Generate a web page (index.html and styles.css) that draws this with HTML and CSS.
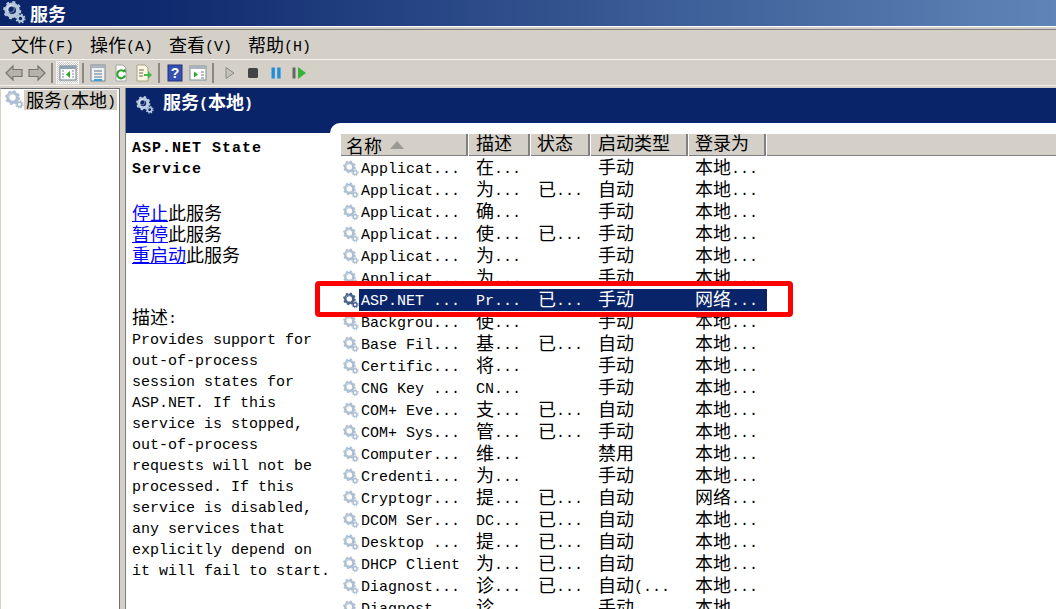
FILE: index.html
```html
<!DOCTYPE html>
<html lang="zh-CN">
<head>
<meta charset="utf-8">
<title>服务</title>
<link rel="stylesheet" href="styles.css">
</head>
<body>
<svg class="sprite" xmlns="http://www.w3.org/2000/svg">
  <symbol id="gear" viewBox="0 0 20 20">
    <circle cx="8" cy="8" r="5" fill="none" stroke="currentColor" stroke-width="3.4"/>
    <circle cx="8" cy="8" r="6.9" fill="none" stroke="currentColor" stroke-width="2" stroke-dasharray="2.6 2.8"/>
    <circle cx="15.2" cy="15.2" r="2.4" fill="none" stroke="currentColor" stroke-width="1.8"/>
    <circle cx="15.2" cy="15.2" r="3.8" fill="none" stroke="currentColor" stroke-width="1.2" stroke-dasharray="1.5 1.5"/>
    <circle cx="6.8" cy="6.8" r="3" fill="none" stroke="#fff" stroke-opacity=".45" stroke-width="1"/>
  </symbol>
</svg>
<div class="window">
  <header class="titlebar">
    <svg class="title-gear"><use href="#gear"/></svg>
    <span class="c title-text">服务</span>
  </header>
  <nav class="menubar">
    <span class="menu"><span class="c">文件</span>(F)</span>
    <span class="menu"><span class="c">操作</span>(A)</span>
    <span class="menu"><span class="c">查看</span>(V)</span>
    <span class="menu"><span class="c">帮助</span>(H)</span>
  </nav>
  <div class="toolbar">
    <span class="tool"><svg viewBox="0 0 18 18"><path d="M1 9 8 2v3.500h9v7H8V16z" fill="#b5b2ab" stroke="#77756f" stroke-width="1.2"/></svg></span>
    <span class="tool"><svg viewBox="0 0 18 18"><path d="M17 9 10 2v3.500H1v7h9V16z" fill="#b5b2ab" stroke="#77756f" stroke-width="1.2"/></svg></span>
    <span class="sep"></span>
    <span class="tool active"><svg viewBox="0 0 18 18"><rect x="1" y="2" width="16" height="14" fill="#fff" stroke="#6f7f8c"/><rect x="1" y="2" width="16" height="3" fill="#8fa3b3"/><path d="M11 7v7L7 10.500z" fill="#2fa52f"/><path d="M3 7h2M3 10h2M3 13h2M13 7h2M13 10h2M13 13h2" stroke="#7a8794"/></svg></span>
    <span class="sep narrow"></span>
    <span class="tool"><svg viewBox="0 0 18 18"><rect x="2" y="1" width="14" height="16" fill="#eef1f2" stroke="#7c8288"/><rect x="2" y="1" width="14" height="3" fill="#a9b4bd"/><path d="M5 7h8M5 10h8M5 13h8" stroke="#5e7487"/><path d="M5 16h8" stroke="#3aa0e0" stroke-width="2"/></svg></span>
    <span class="tool"><svg viewBox="0 0 18 18"><path d="M4 1h7l3 3v13H4z" fill="#fff" stroke="#a0a4a8"/><path d="M12.500 8A4 4 0 1 0 13 11.500" fill="none" stroke="#2fa52f" stroke-width="2.200"/><path d="m10.500 7 3.500 1.500-.5-4z" fill="#2fa52f"/></svg></span>
    <span class="tool"><svg viewBox="0 0 18 18"><path d="M2 1h8l3 3v13H2z" fill="#fbf6df" stroke="#a7a08a"/><path d="M4 6h5M4 9h4M4 12h4" stroke="#6a675c"/><path d="M9 10h4V7l4 4-4 4v-3H9z" fill="#48b848"/></svg></span>
    <span class="sep"></span>
    <span class="tool"><svg viewBox="0 0 18 18"><rect x="2" y="1" width="14" height="16" fill="#3451b2" stroke="#222f7a"/><text x="9" y="14" class="help-mark">?</text></svg></span>
    <span class="tool"><svg viewBox="0 0 18 18"><rect x="1" y="2" width="16" height="14" fill="#fff" stroke="#7f8c96"/><rect x="1" y="2" width="16" height="3" fill="#a8b3bc"/><path d="M5 7.500v6L9 10.500z" fill="#2fa52f"/><path d="M12 8h3M12 11h3M12 14h3" stroke="#6a7a88"/></svg></span>
    <span class="sep"></span>
    <span class="tool media"><svg viewBox="0 0 18 18"><path d="M5 3.500v11l8-5.500z" fill="#c4c2bc" stroke="#8b8a85"/></svg></span>
    <span class="tool media"><svg viewBox="0 0 18 18"><rect x="4" y="4" width="10" height="10" rx="1.500" fill="#444"/></svg></span>
    <span class="tool media"><svg viewBox="0 0 18 18"><rect x="4.500" y="3.500" width="3.400" height="11" fill="#1f8edc"/><rect x="10.200" y="3.500" width="3.400" height="11" fill="#1f8edc"/></svg></span>
    <span class="tool media"><svg viewBox="0 0 18 18"><rect x="2.500" y="3.500" width="3" height="11" fill="#666"/><path d="M8 3v12l8-6z" fill="#35b335"/></svg></span>
  </div>
  <main class="panes">
    <aside class="tree">
      <svg class="tree-gear"><use href="#gear"/></svg>
      <span class="tree-label"><span class="c">服务</span>(<span class="c">本地</span>)</span>
    </aside>
    <div class="splitter"></div>
    <section class="content">
      <div class="content-head">
        <svg class="head-gear"><use href="#gear"/></svg>
        <span class="head-label"><span class="c">服务</span>(<span class="c">本地</span>)</span>
      </div>
      <div class="content-body">
        <div class="detail">
          <div class="detail-name">ASP.NET State<br>Service</div>
          <div class="detail-actions">
            <div><a class="c" href="#">停止</a><span class="c">此服务</span></div>
            <div><a class="c" href="#">暂停</a><span class="c">此服务</span></div>
            <div><a class="c" href="#">重启动</a><span class="c">此服务</span></div>
          </div>
          <div class="detail-desc">
            <span class="c">描述</span>:<br>
            Provides support for<br>
            out-of-process<br>
            session states for<br>
            ASP.NET. If this<br>
            service is stopped,<br>
            out-of-process<br>
            requests will not be<br>
            processed. If this<br>
            service is disabled,<br>
            any services that<br>
            explicitly depend on<br>
            it will fail to start.
          </div>
        </div>
        <div class="list-wrap">
          <div class="list">
            <div class="list-head">
              <div class="th th-name"><span class="c">名称</span><i class="sort"></i></div>
              <div class="th th-desc"><span class="c">描述</span></div>
              <div class="th th-status"><span class="c">状态</span></div>
              <div class="th th-start"><span class="c">启动类型</span></div>
              <div class="th th-logon"><span class="c">登录为</span></div>
              <div class="th th-rest"></div>
            </div>
            <div class="row"><svg class="row-gear"><use href="#gear"/></svg><div class="cells"><span>Applicat...</span><span><span class="c">在</span>...</span><span></span><span><span class="c">手动</span></span><span><span class="c">本地</span>...</span></div></div>
            <div class="row"><svg class="row-gear"><use href="#gear"/></svg><div class="cells"><span>Applicat...</span><span><span class="c">为</span>...</span><span><span class="c">已</span>...</span><span><span class="c">自动</span></span><span><span class="c">本地</span>...</span></div></div>
            <div class="row"><svg class="row-gear"><use href="#gear"/></svg><div class="cells"><span>Applicat...</span><span><span class="c">确</span>...</span><span></span><span><span class="c">手动</span></span><span><span class="c">本地</span>...</span></div></div>
            <div class="row"><svg class="row-gear"><use href="#gear"/></svg><div class="cells"><span>Applicat...</span><span><span class="c">使</span>...</span><span><span class="c">已</span>...</span><span><span class="c">手动</span></span><span><span class="c">本地</span>...</span></div></div>
            <div class="row"><svg class="row-gear"><use href="#gear"/></svg><div class="cells"><span>Applicat...</span><span><span class="c">为</span>...</span><span></span><span><span class="c">手动</span></span><span><span class="c">本地</span>...</span></div></div>
            <div class="row"><svg class="row-gear"><use href="#gear"/></svg><div class="cells"><span>Applicat...</span><span><span class="c">为</span>...</span><span></span><span><span class="c">手动</span></span><span><span class="c">本地</span>...</span></div></div>
            <div class="row selected"><svg class="row-gear"><use href="#gear"/></svg><div class="cells"><span>ASP.NET ...</span><span>Pr...</span><span><span class="c">已</span>...</span><span><span class="c">手动</span></span><span><span class="c">网络</span>...</span></div></div>
            <div class="row"><svg class="row-gear"><use href="#gear"/></svg><div class="cells"><span>Backgrou...</span><span><span class="c">使</span>...</span><span></span><span><span class="c">手动</span></span><span><span class="c">本地</span>...</span></div></div>
            <div class="row"><svg class="row-gear"><use href="#gear"/></svg><div class="cells"><span>Base Fil...</span><span><span class="c">基</span>...</span><span><span class="c">已</span>...</span><span><span class="c">自动</span></span><span><span class="c">本地</span>...</span></div></div>
            <div class="row"><svg class="row-gear"><use href="#gear"/></svg><div class="cells"><span>Certific...</span><span><span class="c">将</span>...</span><span></span><span><span class="c">手动</span></span><span><span class="c">本地</span>...</span></div></div>
            <div class="row"><svg class="row-gear"><use href="#gear"/></svg><div class="cells"><span>CNG Key ...</span><span>CN...</span><span></span><span><span class="c">手动</span></span><span><span class="c">本地</span>...</span></div></div>
            <div class="row"><svg class="row-gear"><use href="#gear"/></svg><div class="cells"><span>COM+ Eve...</span><span><span class="c">支</span>...</span><span><span class="c">已</span>...</span><span><span class="c">自动</span></span><span><span class="c">本地</span>...</span></div></div>
            <div class="row"><svg class="row-gear"><use href="#gear"/></svg><div class="cells"><span>COM+ Sys...</span><span><span class="c">管</span>...</span><span><span class="c">已</span>...</span><span><span class="c">手动</span></span><span><span class="c">本地</span>...</span></div></div>
            <div class="row"><svg class="row-gear"><use href="#gear"/></svg><div class="cells"><span>Computer...</span><span><span class="c">维</span>...</span><span></span><span><span class="c">禁用</span></span><span><span class="c">本地</span>...</span></div></div>
            <div class="row"><svg class="row-gear"><use href="#gear"/></svg><div class="cells"><span>Credenti...</span><span><span class="c">为</span>...</span><span></span><span><span class="c">手动</span></span><span><span class="c">本地</span>...</span></div></div>
            <div class="row"><svg class="row-gear"><use href="#gear"/></svg><div class="cells"><span>Cryptogr...</span><span><span class="c">提</span>...</span><span><span class="c">已</span>...</span><span><span class="c">自动</span></span><span><span class="c">网络</span>...</span></div></div>
            <div class="row"><svg class="row-gear"><use href="#gear"/></svg><div class="cells"><span>DCOM Ser...</span><span>DC...</span><span><span class="c">已</span>...</span><span><span class="c">自动</span></span><span><span class="c">本地</span>...</span></div></div>
            <div class="row"><svg class="row-gear"><use href="#gear"/></svg><div class="cells"><span>Desktop ...</span><span><span class="c">提</span>...</span><span><span class="c">已</span>...</span><span><span class="c">自动</span></span><span><span class="c">本地</span>...</span></div></div>
            <div class="row"><svg class="row-gear"><use href="#gear"/></svg><div class="cells"><span>DHCP Client</span><span><span class="c">为</span>...</span><span><span class="c">已</span>...</span><span><span class="c">自动</span></span><span><span class="c">本地</span>...</span></div></div>
            <div class="row"><svg class="row-gear"><use href="#gear"/></svg><div class="cells"><span>Diagnost...</span><span><span class="c">诊</span>...</span><span><span class="c">已</span>...</span><span><span class="c">自动</span>(...</span><span><span class="c">本地</span>...</span></div></div>
            <div class="row"><svg class="row-gear"><use href="#gear"/></svg><div class="cells"><span>Diagnost...</span><span><span class="c">诊</span>...</span><span></span><span><span class="c">手动</span></span><span><span class="c">本地</span>...</span></div></div>
          </div>
        </div>
      </div>
    </section>
  </main>
  <div class="callout"></div>
</div>
</body>
</html>
```

FILE: styles.css
```css
html, body {
  margin: 0;
  height: 609px;
  overflow: hidden;
}
body {
  background: #d4d0c8;
  color: #000;
  font: 15px/21px "Liberation Mono", monospace;
}
.sprite { display: none; }
.c {
  font-family: "Noto Sans CJK SC", sans-serif;
  font-size: 18px;
  line-height: 0;
  vertical-align: -1px;
}
.window {
  position: relative;
  height: 609px;
  overflow: hidden;
}

/* title bar */
.titlebar {
  height: 25px;
  padding: 0 0 1px 3px;
  display: flex;
  align-items: center;
  background: linear-gradient(90deg, #0a246a 0%, #0f2a6e 15%, #5f85b7 100%);
  border-bottom: 1px solid #fff;
  color: #fff;
}
.title-gear {
  width: 23px;
  height: 23px;
  color: #b4c6da;
}
.title-text {
  margin-left: 4px;
  font-weight: 700;
}

/* menu */
.menubar {
  height: 23px;
  padding: 6px 0 0 11px;
  margin-top: 2px;
  display: flex;
  align-items: center;
  gap: 16px;
  border-top: 1px solid #808080;
  border-bottom: 1px solid #f4f2ee;
}

/* toolbar */
.toolbar {
  height: 25px;
  display: flex;
  align-items: center;
  padding-left: 2px;
  border-bottom: 1px solid #f4f2ee;
}
.tool {
  width: 23px;
  height: 23px;
  flex: none;
  display: flex;
  align-items: center;
  justify-content: center;
}
.tool svg {
  width: 18px;
  height: 18px;
}
.tool.active {
  box-sizing: border-box;
  background: repeating-conic-gradient(#fff 0 25%, #c8c5be 0 50%) 0 0 / 2px 2px;
  border: 1px solid #f4f2ee;
}
.sep {
  flex: none;
  width: 8px;
  height: 20px;
  background: linear-gradient(#8a8880, #8a8880) center / 2px 100% no-repeat;
}
.sep.narrow { width: 7px; }
.sep + .tool.media { margin-left: 1px; }
.help-mark {
  font: 700 14px "Liberation Sans", sans-serif;
  text-anchor: middle;
  fill: #fff;
}

/* panes */
.panes {
  display: flex;
  height: 521px;
  margin-top: 2px;
}
.tree {
  width: 120px;
  flex: none;
  box-sizing: border-box;
  display: flex;
  align-items: flex-start;
  padding: 1px 2px 0 4px;
  background: #fff;
  border-top: 1px solid #707070;
  border-left: 1px solid #d4d0c8;
  border-right: 1px solid #707070;
}
.tree-gear {
  width: 19px;
  height: 19px;
  flex: none;
  color: #aebfd4;
}
.tree-label {
  height: 17px;
  line-height: 20px;
  padding: 3px 1px 0 2px;
  background: #d4d0c8;
  white-space: nowrap;
}
.splitter {
  width: 6px;
  flex: none;
  box-sizing: border-box;
  border-right: 1px solid #808080;
}
.content {
  flex: 1;
  min-width: 0;
}
.content-head {
  height: 33px;
  padding: 0 0 2px 10px;
  display: flex;
  align-items: center;
  background: #0a246a;
  color: #fff;
}
.head-gear {
  width: 18px;
  height: 18px;
  color: #b9cbe0;
}
.head-label {
  margin-left: 9px;
  font-weight: 700;
}
.content-body {
  display: flex;
  background: #fff;
}
.detail {
  width: 204px;
  flex: none;
  box-sizing: border-box;
  padding: 5px 0 0 6px;
  border-top: 10px solid #0a246a;
  white-space: nowrap;
}
.detail-name {
  font-weight: 700;
  font-size: 15px;
  letter-spacing: 1px;
}
.detail-actions {
  margin-top: 25px;
}
.detail-actions a {
  color: #0000ff;
  text-decoration: underline;
}
.detail-desc {
  margin-top: 41px;
}

/* list */
.list-wrap {
  flex: 1;
  min-width: 0;
  background: #0a246a;
}
.list {
  background: #fff;
  border-top-left-radius: 10px;
  padding: 11px 0 0 10px;
}
.list-head {
  display: flex;
  height: 22px;
  margin-bottom: 1px;
  background: #d4d0c8;
  box-shadow: inset 0 -1px 0 #808080;
}
.th {
  flex: none;
  box-sizing: border-box;
  height: 22px;
  padding-top: 2px;
  line-height: 20px;
  border-left: 1px solid #fff;
  border-right: 2px solid #808080;
  white-space: nowrap;
}
.th-name { width: 128px; padding: 0 0 0 5px; display: flex; align-items: center; }
.th-desc { width: 62px; padding-left: 7px; }
.th-status { width: 60px; padding-left: 6px; }
.th-start { width: 98px; padding-left: 7px; }
.th-logon { width: 78px; padding-left: 6px; }
.th-rest { flex: 1; border-right: 0; }
.sort {
  width: 0;
  height: 0;
  margin-left: 8px;
  border: solid transparent;
  border-width: 0 7px 8px;
  border-bottom-color: #9c9a94;
}
.row {
  display: flex;
  height: 22px;
  white-space: nowrap;
}
.row-gear {
  width: 16px;
  height: 17px;
  margin: 3px 0 0 3px;
  flex: none;
  color: #aebfd4;
}
.cells {
  display: grid;
  grid-template-columns: 115px 62px 60px 97px 72px;
  grid-template-rows: 18px;
  padding: 4px 0 0 2px;
  line-height: 18px;
}
.selected .row-gear { color: #4a6288; }
.selected .cells {
  background: #0a246a;
  color: #fff;
}

/* red annotation drawn over the screenshot */
.callout {
  position: absolute;
  left: 315px;
  top: 281px;
  width: 478px;
  height: 36px;
  box-sizing: border-box;
  border: 5px solid #ff0000;
  border-radius: 4px;
}
```
